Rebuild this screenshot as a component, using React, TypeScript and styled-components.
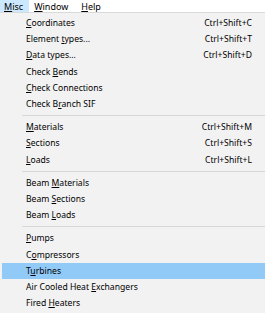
import React from "react";
import styled, { createGlobalStyle } from "styled-components";

const Global = createGlobalStyle`
  html, body { margin: 0; padding: 0; background: #f2f2f2; }
  body { font-family: "Segoe UI", "Noto Sans", "Open Sans", sans-serif; }
`;

const Page = styled.div`
  width: 265px;
  height: 313px;
  overflow: hidden;
  background: #f2f2f2;
  color: #000;
  font-size: 8.6px;
`;

const MenuBar = styled.div`
  display: flex;
  height: 12px;
  background: #ffffff;
  align-items: center;
  border-bottom: 1px solid #d9d9d9;
  font-size: 9px;
`;

const BarItem = styled.div<{ $active?: boolean }>`
  display: flex;
  align-items: center;
  height: 12px;
  padding: 0 6px 0 4px;
  background: ${(p) => (p.$active ? "#cce8ff" : "transparent")};
  box-sizing: border-box;
  margin-right: ${(p) => (p.$active ? "1px" : "3px")};
`;

const Menu = styled.div`
  display: flex;
  flex-direction: column;
  padding-top: 2px;
`;

const Row = styled.div<{ $hl?: boolean }>`
  display: flex;
  align-items: center;
  justify-content: space-between;
  height: 16.2px;
  margin-left: 2px;
  padding: 0 13px 0 24px;
  background: ${(p) => (p.$hl ? "#91c9f7" : "transparent")};
`;

const Shortcut = styled.span`
  color: #000;
`;

const Sep = styled.div`
  height: 1px;
  background: #d7d7d7;
  margin: 3px 0 3px 22px;
`;

const U = styled.span`
  text-decoration: underline;
  text-underline-offset: 1px;
`;

type Item = { pre: string; key: string; post: string; sc?: string; hl?: boolean };

const lbl = (i: Item) => (
  <span>
    {i.pre}
    <U>{i.key}</U>
    {i.post}
  </span>
);

const groups: Item[][] = [
  [
    { pre: "", key: "C", post: "oordinates", sc: "Ctrl+Shift+C" },
    { pre: "Element ", key: "t", post: "ypes...", sc: "Ctrl+Shift+T" },
    { pre: "", key: "D", post: "ata types...", sc: "Ctrl+Shift+D" },
    { pre: "Check ", key: "B", post: "ends" },
    { pre: "", key: "C", post: "heck Connections" },
    { pre: "Check B", key: "r", post: "anch SIF" },
  ],
  [
    { pre: "", key: "M", post: "aterials", sc: "Ctrl+Shift+M" },
    { pre: "", key: "S", post: "ections", sc: "Ctrl+Shift+S" },
    { pre: "", key: "L", post: "oads", sc: "Ctrl+Shift+L" },
  ],
  [
    { pre: "Beam ", key: "M", post: "aterials" },
    { pre: "Beam ", key: "S", post: "ections" },
    { pre: "Beam ", key: "L", post: "oads" },
  ],
  [
    { pre: "", key: "P", post: "umps" },
    { pre: "C", key: "o", post: "mpressors" },
    { pre: "T", key: "u", post: "rbines", hl: true },
    { pre: "Air Cooled Heat ", key: "E", post: "xchangers" },
    { pre: "Fired ", key: "H", post: "eaters" },
  ],
];

export default function App() {
  return (
    <Page>
      <Global />
      <MenuBar>
        <BarItem $active>
          <span>
            <U>M</U>isc
          </span>
        </BarItem>
        <BarItem>
          <span>
            <U>W</U>indow
          </span>
        </BarItem>
        <BarItem>
          <span>
            <U>H</U>elp
          </span>
        </BarItem>
      </MenuBar>
      <Menu>
        {groups.map((g, gi) => (
          <React.Fragment key={gi}>
            {gi > 0 && <Sep />}
            {g.map((it, ii) => (
              <Row key={ii} $hl={it.hl}>
                {lbl(it)}
                {it.sc && <Shortcut>{it.sc}</Shortcut>}
              </Row>
            ))}
          </React.Fragment>
        ))}
      </Menu>
    </Page>
  );
}
